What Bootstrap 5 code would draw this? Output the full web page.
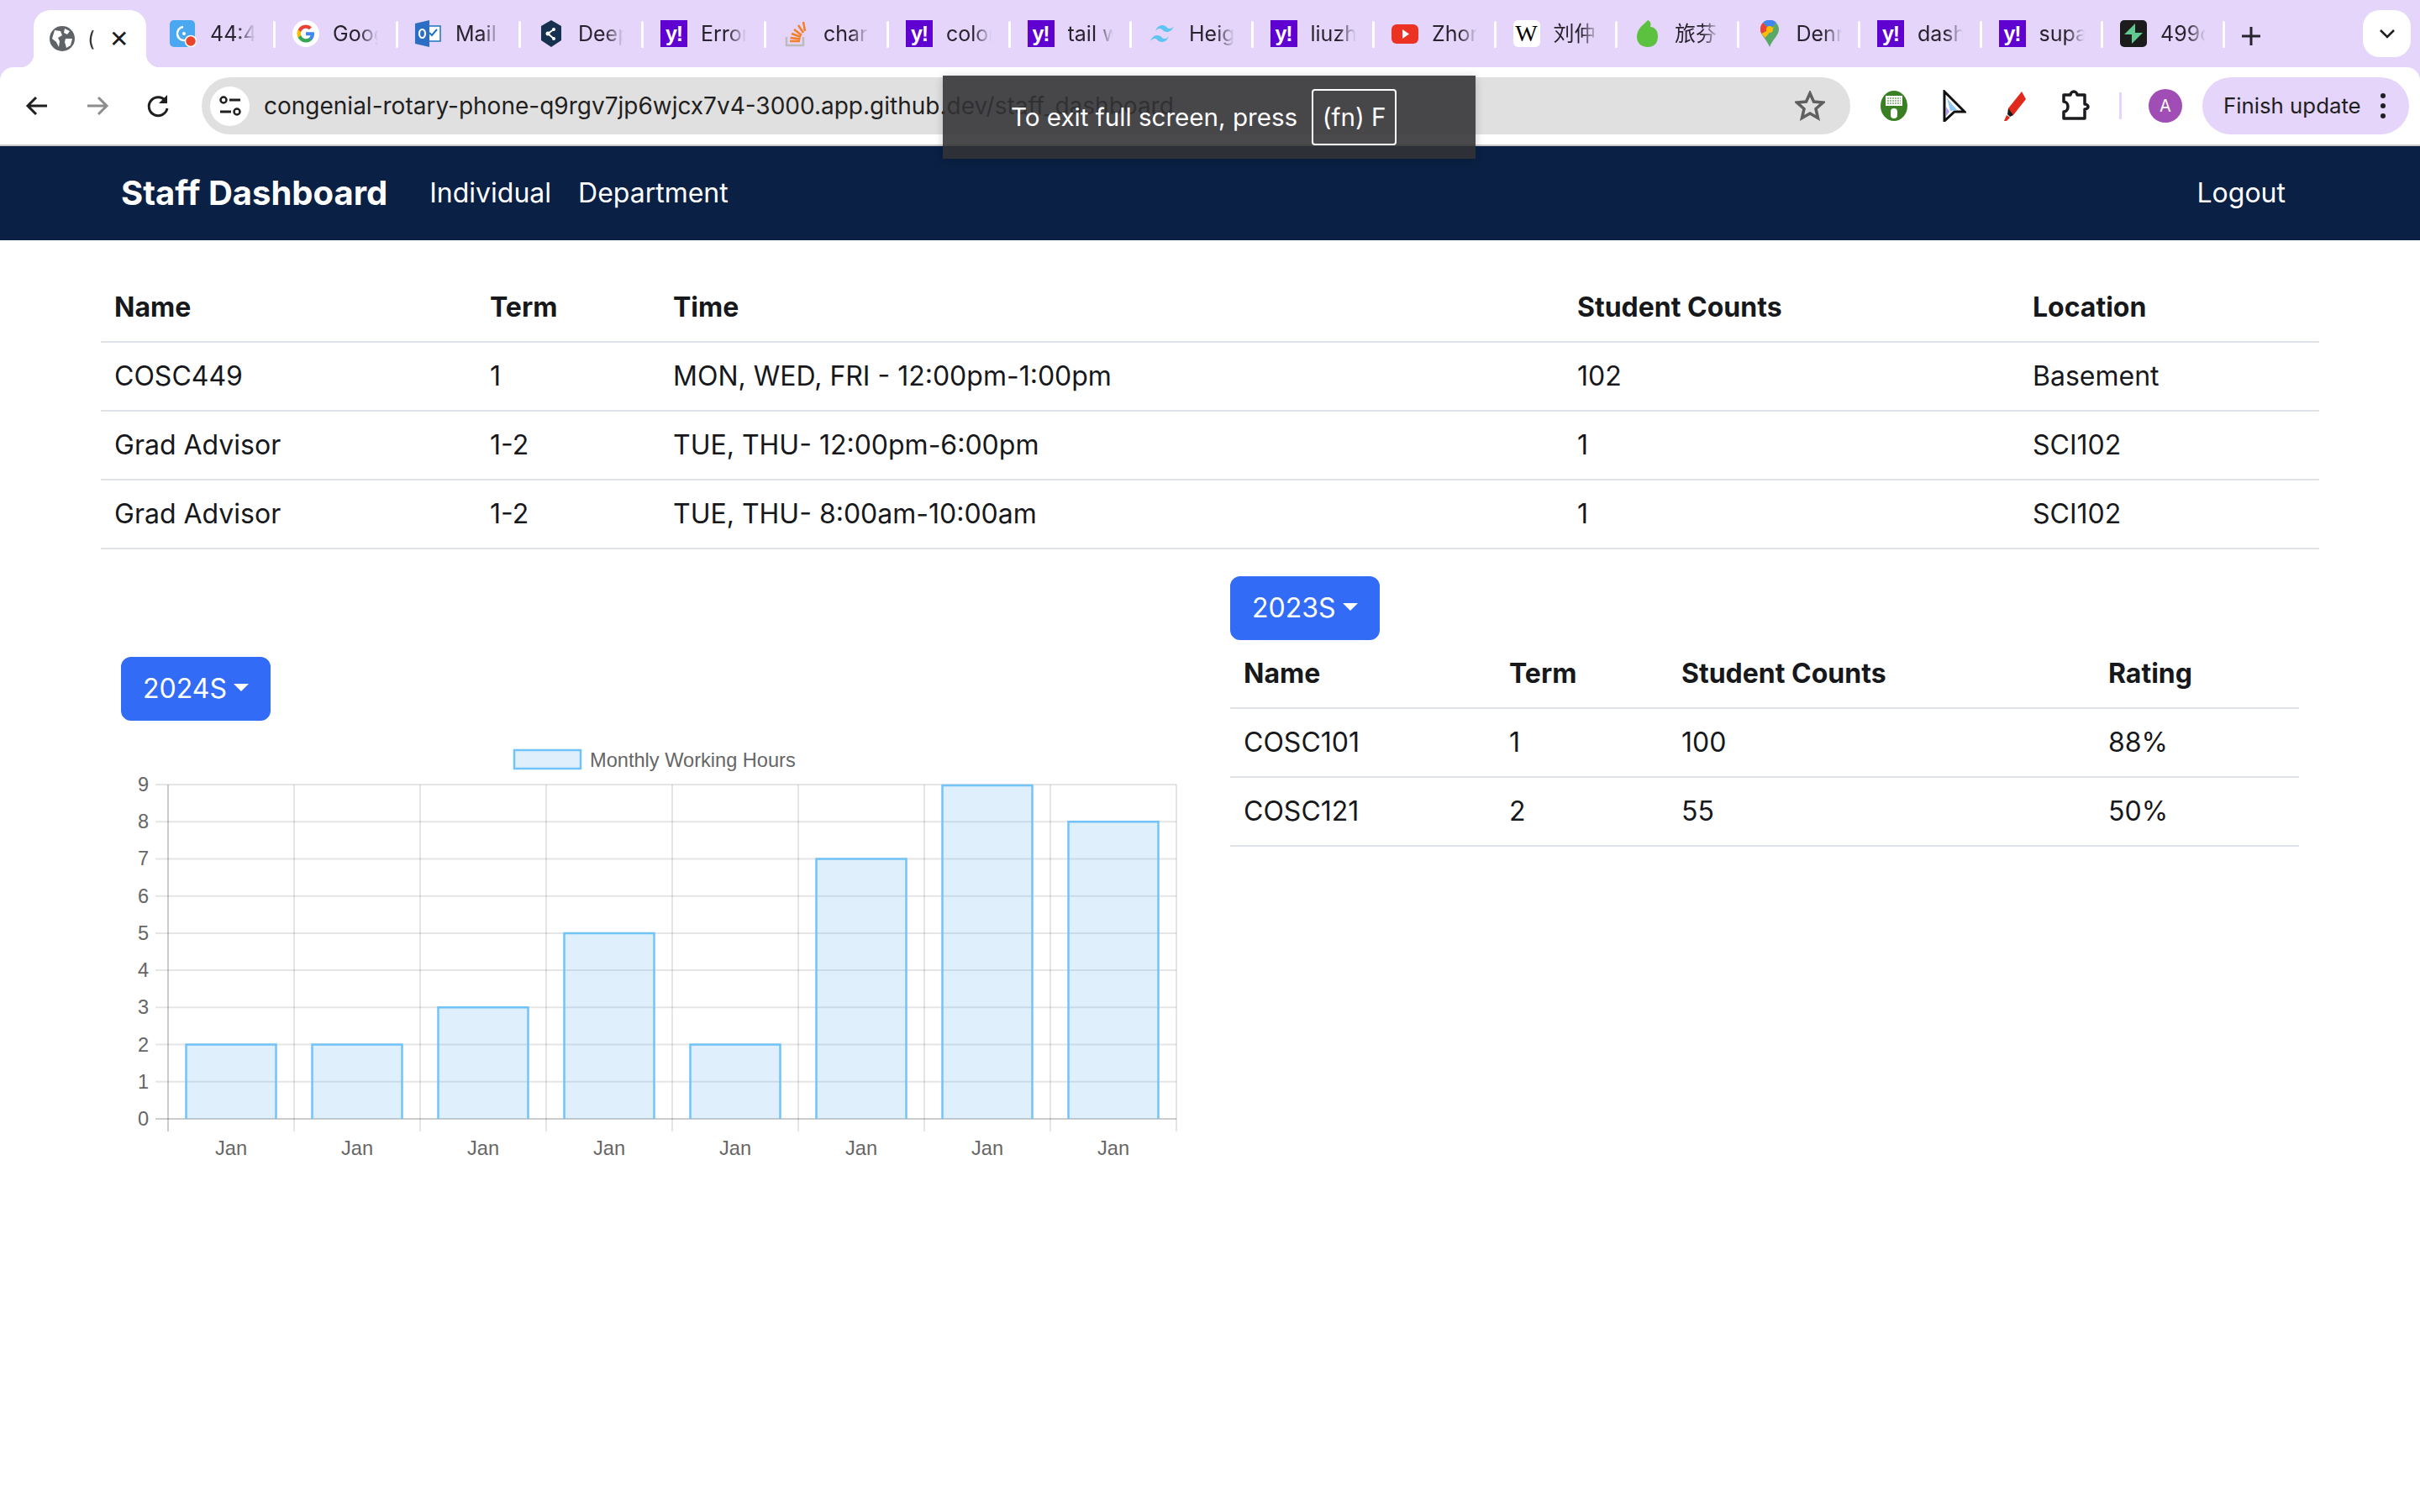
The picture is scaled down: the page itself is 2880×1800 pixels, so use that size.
<!DOCTYPE html>
<html lang="en">
<head>
<meta charset="utf-8">
<title>Staff Dashboard</title>
<link href="https://cdn.jsdelivr.net/npm/bootstrap@5.3.0/dist/css/bootstrap.min.css" rel="stylesheet">
<style>
html{font-size:32px}
body{font-family:Inter,"Noto Sans CJK SC",sans-serif;color:#16181b;background:#fff;height:1800px;overflow:hidden;position:relative}
.tb-strip{height:80px;background:#e5d5fb;padding-left:40px;align-items:flex-end}
.tb-active{width:134px;height:68px;background:#fff;border-radius:20px 20px 0 0;margin-right:12px;position:relative;padding-left:18px;flex:none}
.tb-active::before,.tb-active::after{content:"";position:absolute;bottom:0;width:16px;height:16px}
.tb-active::before{left:-16px;background:radial-gradient(circle at 0 0,transparent 16px,#fff 16.5px)}
.tb-active::after{right:-16px;background:radial-gradient(circle at 100% 0,transparent 16px,#fff 16.5px)}
.tb-active .tb-title{width:10px;margin-left:14px;color:#333}
.tb-x{margin-left:16px;font-size:28px;line-height:1;color:#1b1b1f}
.tb-item{width:146px;height:68px;flex:none;padding:0 0 12px 22px;position:relative}
.tb-item.tb-first{width:140px;padding-left:16px}
.tb-item.tb-sm{width:144.5px}
.tb-item::after{content:"";position:absolute;right:-2px;top:13px;width:3px;height:32px;background:#fff;border-radius:2px}
.tb-ico{width:32px;height:32px;flex:none;display:block}
.tb-yh{width:32px;height:32px;flex:none;background:#5f01d1;color:#fff;font:700 25px/32px "Liberation Sans",sans-serif;text-align:center;letter-spacing:-1px}
.tb-wiki{width:32px;height:32px;flex:none;background:#fff;border-radius:6px;color:#000;font:400 28px/32px "Liberation Serif",serif;text-align:center}
.tb-title{width:54px;margin-left:16px;overflow:hidden;white-space:nowrap;font-size:25px;line-height:32px;color:#28242e;-webkit-mask-image:linear-gradient(90deg,#000 60%,transparent)}
.tb-plus{margin-left:20px;margin-bottom:24px;width:26px;height:26px;flex:none;display:block}
.tb-more{width:57px;height:56px;background:#fff;border-radius:20px;margin-left:auto;margin-right:11px;margin-bottom:12px}
.tb-row{height:94px;background:#fff;border-bottom:2px solid #c9c9c9;padding:12px 12px 0 8px;border-radius:16px 16px 0 0;position:relative;align-items:flex-start}
.tb-rowbg{background:#e5d5fb}
.tb-nav{width:72px;height:68px}
.tb-omni{width:1962px;height:68px;background:#e0e0e0;border-radius:34px;margin-left:16px;padding:0 30px 0 10px;font-size:28px;color:#1f1f1f;white-space:nowrap;flex:none}
.tb-site{width:47px;height:47px;background:#fff;border-radius:50%;flex:none;margin-right:17px}
.tb-tool{width:72px;height:68px;flex:none}
.tb-toolfirst{margin-left:16px}
.tb-sep{width:3px;height:32px;background:#e5d5fb;margin:18px 16px 0 16px;flex:none}
.tb-avatar{width:40px;height:40px;background:#a04db5;color:#fff;border-radius:50%;font-size:20px;line-height:40px;text-align:center;flex:none;margin:14px 0 0 16px}
.tb-update{width:246px;height:68px;background:#e5d5fb;border-radius:34px;margin-left:24px;padding:0 26px 0 25px;font-size:25.8px;color:#1f1f1f;white-space:nowrap;flex:none}
.tb-notice{position:absolute;left:1122px;top:90px;width:634px;height:99px;background:rgba(51,51,54,.886);color:#fff;font-size:29.6px;padding:16px 0 0 81px;box-shadow:0 2px 10px rgba(0,0,0,.2)}
.tb-noticetext{line-height:67px}
.tb-key{border:2px solid #fff;border-radius:4px;width:101px;height:67px;margin-left:17px;line-height:63px;text-align:center;flex:none}
.staff-nav{background:#0a2145;height:112px}
.staff-nav .staff-inner{padding:0 144px}
.staff-nav .navbar-brand{font-weight:700;color:#fff;font-size:40px;margin-right:34px}
.staff-nav .nav-link{color:#fff}
.staff-main{padding:40px 120px 0}
.table{--bs-table-color:#16181b;--bs-table-border-color:#dee2e6;table-layout:fixed}
.table>:not(caption)>*>*{border-bottom-width:2px}
thead th{font-weight:700}
.ca1{width:447px}.ca2{width:218px}.ca3{width:1076px}.ca4{width:542px}
.cb1{width:316px}.cb2{width:205px}.cb3{width:508px}
.staff-btn{--bs-btn-bg:#326cf6;--bs-btn-border-color:#326cf6;--bs-btn-border-width:2px}
.staff-left{padding-top:96px}
.staff-chart{display:block;width:1272px;height:510px;margin-top:22px}
.staff-chart text{font-family:"Liberation Sans",sans-serif;font-size:23.6px;fill:#666}
.gl{stroke:rgba(0,0,0,.1);stroke-width:2}
.ax{stroke:rgba(0,0,0,.2);stroke-width:2}
.br{fill:rgba(90,170,240,.19);stroke:#72c3f9;stroke-width:2.5}
</style>
</head>
<body>
<div class="tb-rowbg">
<div class="d-flex tb-strip">
  <div class="tb-active d-flex align-items-center">
    <svg class="tb-ico" viewBox="0 0 32 32"><circle cx="16" cy="16" r="15" fill="#5f6368"/><path d="M7 6l7 1 2 5-5 3 2 4-1 7-3-6-5-4zM19 4l6 3-3 4-4-2zM20 16l8 0-2 8-5 3-2-7z" fill="#fff"/></svg>
    <div class="tb-title">(</div>
    <div class="tb-x">✕</div>
  </div>
  <div class="tb-item tb-first d-flex align-items-center">
    <svg class="tb-ico" viewBox="0 0 32 32"><rect width="30" height="32" rx="5" fill="#4aa8f0"/><path d="M16 8a8 8 0 1 0 2 16" fill="none" stroke="#fff" stroke-width="2.5"/><circle cx="17" cy="16" r="2" fill="#fff"/><circle cx="25" cy="25" r="6.5" fill="#e8452c" stroke="#fff" stroke-width="1.5"/></svg>
    <div class="tb-title">44:4</div>
  </div>
  <div class="tb-item d-flex align-items-center">
    <svg class="tb-ico" viewBox="0 0 32 32"><circle cx="16" cy="16" r="16" fill="#fff"/><path d="M26 16.3c0-.8-.1-1.500-.2-2.100H16v4h5.600a4.800 4.800 0 0 1-2.100 3.100v2.600h3.400c2-1.800 3.100-4.500 3.100-7.600z" fill="#4285f4"/><path d="M16 26.500c2.800 0 5.200-.9 6.900-2.600l-3.400-2.600c-.9.600-2.100 1-3.500 1-2.700 0-5-1.800-5.800-4.300H6.700v2.700a10.500 10.500 0 0 0 9.300 5.800z" fill="#34a853"/><path d="M10.200 18c-.4-1.300-.4-2.700 0-4v-2.700H6.700a10.500 10.500 0 0 0 0 9.400z" fill="#fbbc05"/><path d="M16 9.700c1.500 0 2.900.5 4 1.600l3-3A10.100 10.100 0 0 0 16 5.500a10.500 10.500 0 0 0-9.300 5.800l3.500 2.700c.8-2.500 3.100-4.300 5.800-4.300z" fill="#ea4335"/></svg>
    <div class="tb-title">Goog</div>
  </div>
  <div class="tb-item d-flex align-items-center">
    <svg class="tb-ico" viewBox="0 0 32 32"><rect x="14" y="7" width="16" height="18" fill="#fff" stroke="#1f72c4" stroke-width="1.500"/><path d="M17 15l3 3 6-7" fill="none" stroke="#1f72c4" stroke-width="2"/><path d="M0 4L17 0v32L0 28z" fill="#2a6fc4"/><ellipse cx="8.500" cy="16" rx="3.500" ry="5" fill="none" stroke="#fff" stroke-width="2.200"/></svg>
    <div class="tb-title">Mail</div>
  </div>
  <div class="tb-item d-flex align-items-center">
    <svg class="tb-ico" viewBox="0 0 32 32"><path d="M16 0l12 7v17L16 32 4 24V7z" fill="#16304f"/><path d="M12 16l7-5M12 16l7 6" stroke="#fff" stroke-width="2"/><circle cx="12" cy="16" r="2.500" fill="#fff"/><circle cx="19" cy="11" r="2" fill="#fff"/><circle cx="19" cy="22" r="2" fill="#fff"/></svg>
    <div class="tb-title">Deep</div>
  </div>
  <div class="tb-item d-flex align-items-center"><div class="tb-yh">y!</div><div class="tb-title">Error</div></div>
  <div class="tb-item d-flex align-items-center">
    <svg class="tb-ico" viewBox="0 0 32 32"><path d="M4 20v10h20V20" fill="none" stroke="#bcbbbb" stroke-width="2.500"/><path d="M8 25h12M8.500 21l12 1.500M10 16l11 4M13 11l9 7M18 6l6 9M24 2l2 11" stroke="#f48024" stroke-width="2.500"/></svg>
    <div class="tb-title">chart</div>
  </div>
  <div class="tb-item tb-sm d-flex align-items-center"><div class="tb-yh">y!</div><div class="tb-title">color</div></div>
  <div class="tb-item tb-sm d-flex align-items-center"><div class="tb-yh">y!</div><div class="tb-title">tail w</div></div>
  <div class="tb-item tb-sm d-flex align-items-center">
    <svg class="tb-ico" viewBox="0 0 32 32"><path d="M8 13c2-5 5-7 8-7 5 0 5.500 3.500 8 4 2 .4 4-.5 6-3-2 5-5 7-8 7-5 0-5.500-3.500-8-4-2-.4-4 .5-6 3zM2 25c2-5 5-7 8-7 5 0 5.500 3.500 8 4 2 .4 4-.5 6-3-2 5-5 7-8 7-5 0-5.500-3.500-8-4-2-.4-4 .5-6 3z" fill="#5fc4f2"/></svg>
    <div class="tb-title">Heig</div>
  </div>
  <div class="tb-item tb-sm d-flex align-items-center"><div class="tb-yh">y!</div><div class="tb-title">liuzh</div></div>
  <div class="tb-item tb-sm d-flex align-items-center">
    <svg class="tb-ico" viewBox="0 0 32 32"><rect y="5" width="32" height="23" rx="6" fill="#ec3323"/><path d="M13 11l8 5.500-8 5.500z" fill="#fff"/></svg>
    <div class="tb-title">Zhon</div>
  </div>
  <div class="tb-item tb-sm d-flex align-items-center"><div class="tb-wiki">W</div><div class="tb-title">刘仲</div></div>
  <div class="tb-item tb-sm d-flex align-items-center">
    <svg class="tb-ico" viewBox="0 0 32 32"><path d="M16 0c-4 5-13 9-13 20 0 7 5 12 13 12s12-5 12-13c0-7-4-11-9-11 1-3 1-6-3-8z" fill="#5cc13f"/></svg>
    <div class="tb-title">旅芬</div>
  </div>
  <div class="tb-item tb-sm d-flex align-items-center">
    <svg class="tb-ico" viewBox="0 0 32 32"><path d="M16 0a11 11 0 0 1 11 11c0 7-7 11-11 21C12 22 5 18 5 11A11 11 0 0 1 16 0z" fill="#5aa866"/><path d="M8 3a11 11 0 0 1 16 0L16 11z" fill="#4285f4"/><path d="M8 3a11 11 0 0 0-3 8c0 2 .5 3.500 1.500 5L16 11z" fill="#ea4335"/><path d="M6.500 16c1 1.500 2.500 3 4 5L22 8z" fill="#fbbc05"/><circle cx="16" cy="11" r="4" fill="#fbbc05"/></svg>
    <div class="tb-title">Denr</div>
  </div>
  <div class="tb-item tb-sm d-flex align-items-center"><div class="tb-yh">y!</div><div class="tb-title">dash</div></div>
  <div class="tb-item tb-sm d-flex align-items-center"><div class="tb-yh">y!</div><div class="tb-title">supa</div></div>
  <div class="tb-item tb-sm d-flex align-items-center">
    <svg class="tb-ico" viewBox="0 0 32 32"><rect width="32" height="32" rx="5" fill="#1c1c1c"/><path d="M18 4v11h9L14 28V17H5z" fill="#60c98f"/></svg>
    <div class="tb-title">499c</div>
  </div>
  <svg class="tb-plus" viewBox="0 0 26 26"><path d="M13 2v22M2 13h22" stroke="#28242e" stroke-width="3"/></svg>
  <div class="tb-more d-flex align-items-center justify-content-center">
    <svg width="20" height="12" viewBox="0 0 20 12"><path d="M2 2l8 8 8-8" fill="none" stroke="#1f1f1f" stroke-width="2.500"/></svg>
  </div>
</div>
<div class="d-flex tb-row">
  <div class="tb-nav d-flex align-items-center justify-content-center">
    <svg width="30" height="30" viewBox="0 0 30 30"><path d="M27 15H5M14 5L4 15l10 10" fill="none" stroke="#1f1f1f" stroke-width="3"/></svg>
  </div>
  <div class="tb-nav d-flex align-items-center justify-content-center">
    <svg width="30" height="30" viewBox="0 0 30 30"><path d="M3 15h22M16 5l10 10-10 10" fill="none" stroke="#8d8d8d" stroke-width="3"/></svg>
  </div>
  <div class="tb-nav d-flex align-items-center justify-content-center">
    <svg width="30" height="30" viewBox="0 0 30 30"><path d="M24 9a11 11 0 1 0 2 9" fill="none" stroke="#1f1f1f" stroke-width="3"/><path d="M26 2v10H16z" fill="#1f1f1f"/></svg>
  </div>
  <div class="tb-omni d-flex align-items-center">
    <div class="tb-site d-flex align-items-center justify-content-center">
      <svg width="30" height="30" viewBox="0 0 30 30"><circle cx="7" cy="8" r="3.500" fill="none" stroke="#1f1f1f" stroke-width="2.500"/><path d="M14 8h13M3 22h13" stroke="#1f1f1f" stroke-width="3"/><circle cx="23" cy="22" r="3.500" fill="none" stroke="#1f1f1f" stroke-width="2.500"/></svg>
    </div>
    <span>congenial-rotary-phone-q9rgv7jp6wjcx7v4-3000.app.github.dev/staff_dashboard</span>
    <svg class="ms-auto" width="36" height="36" viewBox="0 0 36 36"><path d="M18 3l4.500 10 11 1-8.500 7.500 2.500 11L18 27l-9.500 5.500 2.500-11L2.500 14l11-1z" fill="none" stroke="#5f5f5f" stroke-width="3.500"/></svg>
  </div>
  <div class="tb-tool tb-toolfirst d-flex align-items-center justify-content-center">
    <svg width="32" height="36" viewBox="0 0 32 36"><ellipse cx="16" cy="18" rx="16" ry="18" fill="#3a7f24"/><rect x="6" y="6" width="20" height="12" fill="#fff"/><path d="M8 9h16M8 12h16M8 15h16" stroke="#3a7f24" stroke-width="1.200" stroke-dasharray="2 1"/><rect x="12" y="21" width="8" height="12" rx="4" fill="#fff"/></svg>
  </div>
  <div class="tb-tool d-flex align-items-center justify-content-center">
    <svg width="28" height="38" viewBox="0 0 28 38"><path d="M2 2l24 24-12 0-12 11z" fill="#fff" stroke="#111" stroke-width="3"/><path d="M5 10l12 14-8 1z" fill="#8fc7f5"/><path d="M4 20l4 6-4 5z" fill="#b39cf0"/></svg>
  </div>
  <div class="tb-tool d-flex align-items-center justify-content-center">
    <svg width="28" height="38" viewBox="0 0 28 38"><path d="M6 22L22 2l5 9-15 19-6-2z" fill="#e0291a"/><path d="M6 22l6 8-4 2-3-3z" fill="#1a1a1a"/><path d="M4 30l4 3-4 4H1z" fill="#e0291a"/></svg>
  </div>
  <div class="tb-tool d-flex align-items-center justify-content-center">
    <svg width="34" height="38" viewBox="0 0 34 38"><path d="M3 6h8c0-2 2-4 4-4s4 2 4 4h9v11c3 0 4 2 4 3s-1 3-4 3v11H3V26c3 0 5-3 5-6s-2-6-5-6z" fill="none" stroke="#1b1b1f" stroke-width="3.500" stroke-linejoin="round"/></svg>
  </div>
  <div class="tb-sep"></div>
  <div class="tb-avatar">A</div>
  <div class="tb-update d-flex align-items-center">
    <span>Finish update</span>
    <svg class="ms-auto" width="10" height="36" viewBox="0 0 10 36"><circle cx="5" cy="6" r="3" fill="#1f1f1f"/><circle cx="5" cy="18" r="3" fill="#1f1f1f"/><circle cx="5" cy="30" r="3" fill="#1f1f1f"/></svg>
  </div>
</div>
</div>

<nav class="navbar navbar-expand navbar-dark staff-nav p-0">
  <div class="container-fluid staff-inner">
    <a class="navbar-brand" href="#">Staff Dashboard</a>
    <ul class="navbar-nav me-auto">
      <li class="nav-item"><a class="nav-link" href="#">Individual</a></li>
      <li class="nav-item"><a class="nav-link" href="#">Department</a></li>
    </ul>
    <ul class="navbar-nav">
      <li class="nav-item"><a class="nav-link" href="#">Logout</a></li>
    </ul>
  </div>
</nav>

<main class="staff-main">
  <table class="table">
    <colgroup><col class="ca1"><col class="ca2"><col class="ca3"><col class="ca4"><col></colgroup>
    <thead><tr><th>Name</th><th>Term</th><th>Time</th><th>Student Counts</th><th>Location</th></tr></thead>
    <tbody>
      <tr><td>COSC449</td><td>1</td><td>MON, WED, FRI - 12:00pm-1:00pm</td><td>102</td><td>Basement</td></tr>
      <tr><td>Grad Advisor</td><td>1-2</td><td>TUE, THU- 12:00pm-6:00pm</td><td>1</td><td>SCI102</td></tr>
      <tr><td>Grad Advisor</td><td>1-2</td><td>TUE, THU- 8:00am-10:00am</td><td>1</td><td>SCI102</td></tr>
    </tbody>
  </table>
  <div class="row mx-0">
    <div class="col-6 staff-left">
      <div class="dropdown"><button class="btn btn-primary staff-btn dropdown-toggle" type="button">2024S</button></div>
      <svg class="staff-chart" viewBox="144 880 1272 510">
        <rect x="612" y="893" width="79" height="22" fill="rgba(90,170,240,.19)" stroke="#72c3f9" stroke-width="2.5"/>
        <text x="702" y="913">Monthly Working Hours</text>
        <g>
          <line class="gl" x1="185" x2="1400" y1="934" y2="934"/><line class="gl" x1="185" x2="1400" y1="978.200" y2="978.200"/><line class="gl" x1="185" x2="1400" y1="1022.400" y2="1022.400"/><line class="gl" x1="185" x2="1400" y1="1066.700" y2="1066.700"/><line class="gl" x1="185" x2="1400" y1="1110.900" y2="1110.900"/><line class="gl" x1="185" x2="1400" y1="1155.100" y2="1155.100"/><line class="gl" x1="185" x2="1400" y1="1199.300" y2="1199.300"/><line class="gl" x1="185" x2="1400" y1="1243.600" y2="1243.600"/><line class="gl" x1="185" x2="1400" y1="1287.800" y2="1287.800"/>
          <line class="ax" x1="185" x2="1400" y1="1332" y2="1332"/>
          <line class="ax" x1="200" x2="200" y1="934" y2="1347"/><line class="gl" x1="350" x2="350" y1="934" y2="1347"/><line class="gl" x1="500" x2="500" y1="934" y2="1347"/><line class="gl" x1="650" x2="650" y1="934" y2="1347"/><line class="gl" x1="800" x2="800" y1="934" y2="1347"/><line class="gl" x1="950" x2="950" y1="934" y2="1347"/><line class="gl" x1="1100" x2="1100" y1="934" y2="1347"/><line class="gl" x1="1250" x2="1250" y1="934" y2="1347"/><line class="gl" x1="1400" x2="1400" y1="934" y2="1347"/>
        </g>
        <g>
          <path class="br" d="M221.500 1332V1243.600H328.500V1332"/>
          <path class="br" d="M371.500 1332V1243.600H478.500V1332"/>
          <path class="br" d="M521.500 1332V1199.300H628.500V1332"/>
          <path class="br" d="M671.500 1332V1110.900H778.500V1332"/>
          <path class="br" d="M821.500 1332V1243.600H928.500V1332"/>
          <path class="br" d="M971.500 1332V1022.400H1078.500V1332"/>
          <path class="br" d="M1121.500 1332V935H1228.500V1332"/>
          <path class="br" d="M1271.500 1332V978.200H1378.500V1332"/>
        </g>
        <g text-anchor="end">
          <text x="177" y="942">9</text><text x="177" y="986">8</text><text x="177" y="1030">7</text><text x="177" y="1075">6</text><text x="177" y="1119">5</text><text x="177" y="1163">4</text><text x="177" y="1207">3</text><text x="177" y="1252">2</text><text x="177" y="1296">1</text><text x="177" y="1340">0</text>
        </g>
        <g text-anchor="middle">
          <text x="275" y="1375">Jan</text><text x="425" y="1375">Jan</text><text x="575" y="1375">Jan</text><text x="725" y="1375">Jan</text><text x="875" y="1375">Jan</text><text x="1025" y="1375">Jan</text><text x="1175" y="1375">Jan</text><text x="1325" y="1375">Jan</text>
        </g>
      </svg>
    </div>
    <div class="col-6">
      <div class="dropdown"><button class="btn btn-primary staff-btn dropdown-toggle" type="button">2023S</button></div>
      <table class="table">
        <colgroup><col class="cb1"><col class="cb2"><col class="cb3"><col></colgroup>
        <thead><tr><th>Name</th><th>Term</th><th>Student Counts</th><th>Rating</th></tr></thead>
        <tbody>
          <tr><td>COSC101</td><td>1</td><td>100</td><td>88%</td></tr>
          <tr><td>COSC121</td><td>2</td><td>55</td><td>50%</td></tr>
        </tbody>
      </table>
    </div>
  </div>
</main>

<div class="tb-notice d-flex"><span class="tb-noticetext">To exit full screen, press</span><div class="tb-key">(fn) F</div></div>
<script src="https://cdn.jsdelivr.net/npm/bootstrap@5.3.0/dist/js/bootstrap.bundle.min.js"></script>
</body>
</html>
